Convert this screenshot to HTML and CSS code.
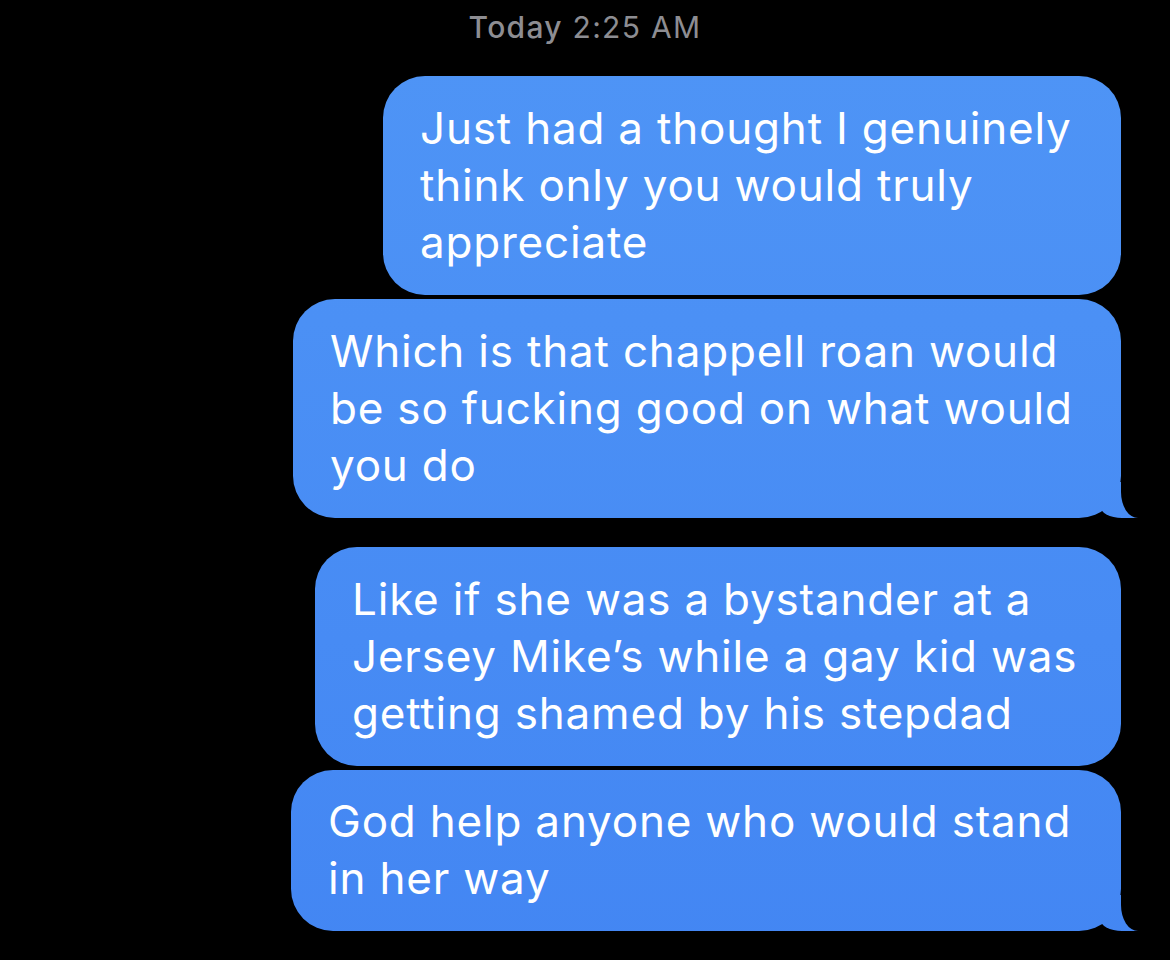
FILE: index.html
```html
<!DOCTYPE html>
<html lang="en">
<head>
<meta charset="utf-8">
<title>Messages</title>
<link rel="stylesheet" href="styles.css">
</head>
<body>
<main class="thread">
  <div class="timestamp"><span class="day">Today</span> 2:25 AM</div>
  <div class="group">
    <div class="bubble b1">Just had a thought I genuinely<br>think only you would truly<br>appreciate</div>
    <div class="bubble b2 tail">Which is that chappell roan would<br>be so fucking good on what would<br>you do</div>
  </div>
  <div class="group">
    <div class="bubble b3">Like if she was a bystander at a<br>Jersey Mike’s while a gay kid was<br>getting shamed by his stepdad</div>
    <div class="bubble b4 tail">God help anyone who would stand<br>in her way</div>
  </div>
</main>
</body>
</html>
```
FILE: styles.css
```css
html, body {
  margin: 0;
  padding: 0;
  background: #000;
}
body {
  width: 1170px;
  height: 960px;
  overflow: hidden;
  font-family: Inter, "Noto Sans", "Liberation Sans", sans-serif;
}
.thread {
  display: flex;
  flex-direction: column;
  padding: 9px 49px 0 0;
}
.timestamp {
  align-self: stretch;
  text-align: center;
  padding-left: 49px;
  color: #8d8d92;
  font-size: 30px;
  line-height: 36px;
  letter-spacing: 1.3px;
  margin-bottom: 31px;
}
.timestamp .day {
  font-weight: 500;
}
.group {
  display: flex;
  flex-direction: column;
  align-items: flex-end;
  gap: 4px;
  margin-bottom: 29px;
}
.bubble {
  position: relative;
  box-sizing: border-box;
  padding: 24px 20px 24px 37px;
  border-radius: 42px;
  background: linear-gradient(180deg, #4f95f6 0%, #4386f3 100%) fixed;
  color: #fff;
  font-size: 44px;
  line-height: 57px;
  white-space: nowrap;
  letter-spacing: 0.8px;
}
.b1 { width: 738px; }
.b2 { width: 828px; }
.b3 { width: 806px; }
.b4 { width: 830px; padding-top: 23px; padding-bottom: 24px; }
.tail::before {
  content: "";
  position: absolute;
  bottom: 0;
  right: -17px;
  width: 38px;
  height: 36px;
  background: linear-gradient(180deg, #4f95f6 0%, #4386f3 100%) fixed;
  border-bottom-left-radius: 22px 12px;
}
.tail::after {
  content: "";
  position: absolute;
  bottom: 0;
  left: 100%;
  width: 26px;
  height: 42px;
  background: #000;
  border-bottom-left-radius: 17px 26px;
}
```
